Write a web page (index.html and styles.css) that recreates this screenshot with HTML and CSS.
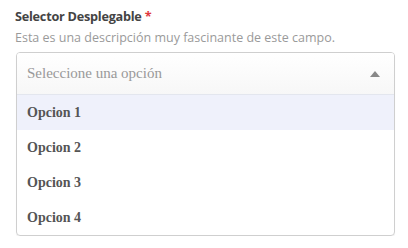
FILE: index.html
```html
<!DOCTYPE html>
<html>
<head>
<meta charset="utf-8">
<link rel="stylesheet" href="styles.css">
</head>
<body>
<div class="field">
  <div class="label">Selector Desplegable <span class="req">*</span></div>
  <div class="desc">Esta es una descripción muy fascinante de este campo.</div>
  <div class="select">
    <div class="select-head">
      <span class="placeholder">Seleccione una opción</span>
      <svg class="caret" width="10" height="6" viewBox="0 0 10 6"><path d="M0 6 L5 0 L10 6 Z" fill="#888"/></svg>
    </div>
    <ul class="options">
      <li class="opt active">Opcion 1</li>
      <li class="opt">Opcion 2</li>
      <li class="opt">Opcion 3</li>
      <li class="opt">Opcion 4</li>
    </ul>
  </div>
</div>
</body>
</html>
```
FILE: styles.css
```css
html, body {
  margin: 0;
  padding: 0;
  background: #fff;
}
.field {
  padding: 7px 13px 0 15px;
  font-family: "Open Sans", "Liberation Sans", sans-serif;
}
.label {
  font-size: 12.7px;
  font-weight: 700;
  color: #444;
  line-height: 18px;
  letter-spacing: -0.25px;
}
.req {
  color: #e0393e;
}
.desc {
  font-size: 12.5px;
  color: #9a9a9a;
  line-height: 20px;
  margin-top: 3px;
}
.select {
  margin-top: 4px;
  margin-left: 1px;
  width: 379px;
  box-sizing: border-box;
  border: 1px solid #cfcfcf;
  border-radius: 4px;
  overflow: hidden;
  box-shadow: 0 1px 1px rgba(0,0,0,0.06);
}
.select-head {
  height: 41px;
  display: flex;
  align-items: center;
  justify-content: space-between;
  padding: 0 14px 0 10px;
  background: linear-gradient(#ffffff, #f7f7f7);
  border-bottom: 1px solid #e3e6ee;
}
.placeholder {
  font-family: "Liberation Serif", serif;
  font-size: 15px;
  color: #999;
}
.caret {
  display: block;
  margin-top: 1px;
}
.options {
  list-style: none;
  margin: 0;
  padding: 0;
}
.opt {
  height: 35px;
  display: flex;
  align-items: center;
  padding-left: 10px;
  font-family: "Liberation Serif", serif;
  font-weight: 700;
  font-size: 14px;
  color: #555;
}
.opt.active {
  background: #eff1fb;
}
```
